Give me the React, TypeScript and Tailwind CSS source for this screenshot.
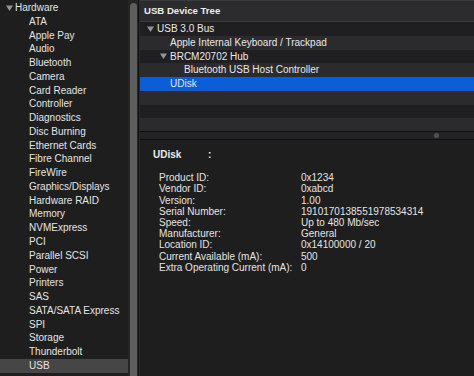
import React from "react";

const sidebarItems = [
  "ATA",
  "Apple Pay",
  "Audio",
  "Bluetooth",
  "Camera",
  "Card Reader",
  "Controller",
  "Diagnostics",
  "Disc Burning",
  "Ethernet Cards",
  "Fibre Channel",
  "FireWire",
  "Graphics/Displays",
  "Hardware RAID",
  "Memory",
  "NVMExpress",
  "PCI",
  "Parallel SCSI",
  "Power",
  "Printers",
  "SAS",
  "SATA/SATA Express",
  "SPI",
  "Storage",
  "Thunderbolt",
  "USB",
];

const details: [string, string][] = [
  ["Product ID:", "0x1234"],
  ["Vendor ID:", "0xabcd"],
  ["Version:", "1.00"],
  ["Serial Number:", "1910170138551978534314"],
  ["Speed:", "Up to 480 Mb/sec"],
  ["Manufacturer:", "General"],
  ["Location ID:", "0x14100000 / 20"],
  ["Current Available (mA):", "500"],
  ["Extra Operating Current (mA):", "0"],
];

function Tri() {
  return (
    <svg width="7" height="6" viewBox="0 0 7 6" className="shrink-0">
      <path d="M0 0.5 L7 0.5 L3.5 6 Z" fill="#949496" />
    </svg>
  );
}

type TreeRow = { label: string; indent: number; tri?: boolean; selected?: boolean };

const treeRows: TreeRow[] = [
  { label: "USB 3.0 Bus", indent: 0, tri: true },
  { label: "Apple Internal Keyboard / Trackpad", indent: 1 },
  { label: "BRCM20702 Hub", indent: 1, tri: true },
  { label: "Bluetooth USB Host Controller", indent: 2 },
  { label: "UDisk", indent: 1, selected: true },
  { label: "", indent: 0 },
  { label: "", indent: 0 },
  { label: "", indent: 0 },
];

const indentClass = ["pl-[17px]", "pl-[30px]", "pl-[44px]"];
const triIndentClass = ["pl-[7px]", "pl-[20px]", "pl-[34px]"];

export default function App() {
  return (
    <div
      className="flex h-[376px] w-[474px] overflow-hidden bg-[#1e1e1e] text-[10px] text-[#e4e4e4]"
      style={{ fontFamily: '"Liberation Sans", Arial, sans-serif' }}
    >
      {/* Sidebar */}
      <div className="flex w-[128px] shrink-0 flex-col pt-[1px]">
        <div className="flex h-[13.77px] items-center gap-[2px] pl-[6px] leading-[13.77px]">
          <Tri />
          <span>Hardware</span>
        </div>
        {sidebarItems.map((item) => (
          <div
            key={item}
            className={
              item === "USB"
                ? "h-[13.77px] bg-[#464646] pl-[29px] leading-[13.77px]"
                : "h-[13.77px] pl-[29px] leading-[13.77px]"
            }
          >
            {item}
          </div>
        ))}
      </div>

      {/* Scrollbar */}
      <div className="flex w-[10px] shrink-0 bg-[#262626] pl-[2px] pt-[3px]">
        <div className="h-[400px] w-[7px] rounded-full bg-[#5e5e5e]" />
      </div>
      <div className="w-[1px] shrink-0 bg-[#121212]" />
      <div className="w-[1px] shrink-0 bg-[#2a2a2a]" />

      {/* Main */}
      <div className="flex min-w-0 flex-1 flex-col">
        <div className="flex h-[21px] shrink-0 items-center border-t border-[#3a3a3c] bg-[#2c2c2e] pl-[4px] text-[9.6px] font-bold text-[#ececec]">
          USB Device Tree
        </div>
        <div className="h-[1px] shrink-0 bg-[#3a3a3c]" />
        <div className="flex h-[109px] shrink-0 flex-col overflow-hidden">
          {treeRows.map((r, i) => {
            const bg = r.selected
              ? "bg-[#0b5ed8]"
              : i % 2 === 0
              ? "bg-[#1f1f21]"
              : "bg-[#2b2b2d]";
            return (
              <div
                key={i}
                className={`flex h-[13.75px] shrink-0 items-center leading-[13.75px] text-[#e8e8e8] ${bg} ${
                  r.tri ? triIndentClass[r.indent] : indentClass[r.indent]
                }`}
              >
                {r.tri && (
                  <span className="mr-[3px] flex">
                    <Tri />
                  </span>
                )}
                <span className="whitespace-nowrap">{r.label}</span>
              </div>
            );
          })}
        </div>
        {/* Splitter */}
        <div className="h-[1px] shrink-0 bg-[#0f0f0f]" />
        <div className="flex h-[7px] shrink-0 items-center justify-end bg-[#232325] pr-[35px]">
          <div className="h-[5px] w-[5px] rounded-full bg-[#505050]" />
        </div>
        <div className="h-[1px] shrink-0 bg-[#0f0f0f]" />

        {/* Details */}
        <div className="flex flex-1 flex-col bg-[#1e1e1e] pt-[9px]">
          <div className="flex pl-[13px] font-bold leading-[11.2px] text-[#ececec]">
            <span className="w-[55px]">UDisk</span>
            <span>:</span>
          </div>
          <div className="mt-[12px] flex flex-col pl-[19px] leading-[11.2px]">
            {details.map(([k, v]) => (
              <div key={k} className="flex">
                <span className="w-[142px] shrink-0 whitespace-nowrap">{k}</span>
                <span className="whitespace-nowrap">{v}</span>
              </div>
            ))}
          </div>
        </div>
      </div>
    </div>
  );
}
